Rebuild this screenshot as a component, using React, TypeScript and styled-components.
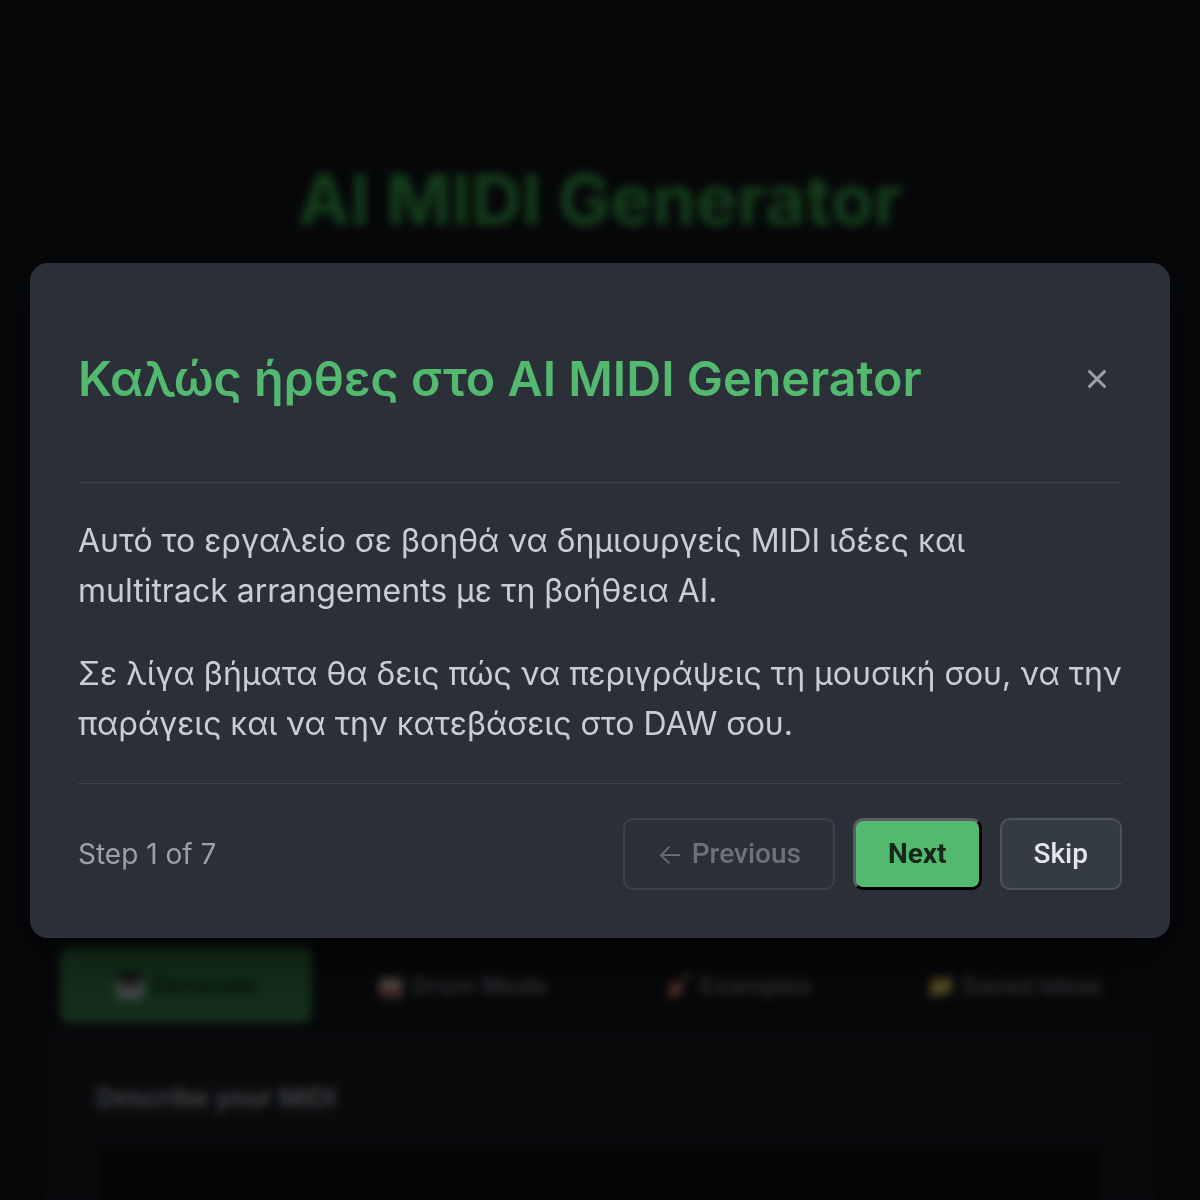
import React from 'react';
import styled, { createGlobalStyle } from 'styled-components';

const GlobalStyle = createGlobalStyle`
  html, body {
    margin: 0;
    padding: 0;
    background: #12151a;
    font-family: Inter, "Noto Sans", sans-serif;
  }
  * { box-sizing: border-box; }
`;

const Page = styled.div`
  height: 1200px;
  overflow: hidden;
  padding: 157px 45px 0;
  display: flex;
  flex-direction: column;
  align-items: center;
`;

const PageTitle = styled.h1`
  margin: 0 0 705px;
  font-size: 70px;
  font-weight: 700;
  color: #3fb950;
`;

const Tabs = styled.div`
  width: 100%;
  display: grid;
  grid-template-columns: repeat(4, 1fr);
  gap: 24px;
  padding: 0 15px;
`;

const Tab = styled.div<{ $active?: boolean }>`
  height: 76px;
  border-radius: 10px;
  display: flex;
  align-items: center;
  justify-content: center;
  gap: 12px;
  font-size: 24px;
  font-weight: 600;
  color: ${({ $active }) => ($active ? '#0d3318' : '#8b949e')};
  background: ${({ $active }) => ($active ? '#3d8a50' : 'transparent')};
`;

const Card = styled.div`
  width: 100%;
  margin-top: 8px;
  background: #1a1e24;
  border: 1px solid #262b33;
  border-radius: 12px;
  padding: 50px 50px;
  height: 300px;
`;

const CardTitle = styled.div`
  font-size: 26px;
  font-weight: 600;
  color: #c9d1d9;
  margin-bottom: 30px;
`;

const TextArea = styled.div`
  height: 140px;
  border: 1px solid #30363d;
  border-radius: 8px;
  background: #0d1117;
`;

const Overlay = styled.div`
  position: fixed;
  inset: 0;
  background: rgba(0, 0, 0, 0.66);
  backdrop-filter: blur(5px);
  display: flex;
  align-items: center;
  justify-content: center;
  padding: 0 30px;
`;

const Modal = styled.div`
  width: 100%;
  max-width: 1140px;
  background: #2b3038;
  border-radius: 18px;
  box-shadow: 0 20px 60px rgba(0, 0, 0, 0.5);
`;

const Header = styled.div`
  padding: 88px 48px 75px;
  display: flex;
  align-items: center;
  justify-content: space-between;
`;

const Title = styled.h2`
  margin: 0;
  font-size: 48.4px;
  line-height: 56px;
  font-weight: 600;
  color: #52b96f;
`;

const CloseButton = styled.button`
  background: none;
  border: none;
  padding: 0;
  margin-right: 12px;
  width: 26px;
  height: 26px;
  color: #9aa1aa;
  cursor: pointer;
  display: flex;
  align-items: center;
  justify-content: center;
`;

const Divider = styled.div`
  height: 1px;
  margin: 0 48px;
  background: #3d434c;
`;

const Body = styled.div`
  padding: 33px 48px 34px;
`;

const Paragraph = styled.p`
  margin: 0;
  font-size: 32px;
  line-height: 50px;
  color: #c9ced6;

  & + & {
    margin-top: 33px;
  }
`;

const Footer = styled.div`
  padding: 34px 48px 48px;
  display: flex;
  align-items: center;
  justify-content: space-between;
`;

const StepLabel = styled.span`
  font-size: 28px;
  color: #9aa1aa;
`;

const Actions = styled.div`
  display: flex;
  gap: 18px;
`;

const Arrow = styled.span`
  font-family: Inter, "DejaVu Sans", sans-serif;
  font-weight: 300;
  margin-right: 8px;
`;

const Button = styled.button<{ $variant: 'ghost' | 'primary' | 'secondary' }>`
  height: 72px;
  padding: 0 32px;
  border-radius: 10px;
  display: flex;
  align-items: center;
  font-family: Roboto, "Liberation Sans", sans-serif;
  font-size: 28px;
  font-weight: ${({ $variant }) => ($variant === 'primary' ? 700 : 500)};
  cursor: pointer;
  ${({ $variant }) =>
    $variant === 'primary'
      ? `
    background: #52b96f;
    color: #16261b;
    border: 3px solid;
    border-color: #5a5d62 #000 #000 #5a5d62;
  `
      : $variant === 'secondary'
      ? `
    background: #353b44;
    color: #e2e6ea;
    border: 2px solid #4b525b;
  `
      : `
    background: transparent;
    color: #6b727b;
    border: 2px solid #3b414a;
    cursor: default;
  `}
`;

export default function App() {
  return (
    <>
      <GlobalStyle />
      <Page>
        <PageTitle>AI MIDI Generator</PageTitle>
        <Tabs>
          <Tab $active>🎹 Generate</Tab>
          <Tab>🥁 Drum Mode</Tab>
          <Tab>🎸 Examples</Tab>
          <Tab>📁 Saved Ideas</Tab>
        </Tabs>
        <Card>
          <CardTitle>Describe your MIDI</CardTitle>
          <TextArea />
        </Card>
      </Page>

      <Overlay>
        <Modal role="dialog">
          <Header>
            <Title>Καλώς ήρθες στο AI MIDI Generator</Title>
            <CloseButton aria-label="Close">
              <svg width="22" height="22" viewBox="0 0 24 24" fill="none" stroke="currentColor" strokeWidth="3.2" strokeLinecap="square">
                <path d="M4 4L20 20M20 4L4 20" />
              </svg>
            </CloseButton>
          </Header>
          <Divider />
          <Body>
            <Paragraph>
              Αυτό το εργαλείο σε βοηθά να δημιουργείς MIDI ιδέες και multitrack arrangements με τη βοήθεια AI.
            </Paragraph>
            <Paragraph>
              Σε λίγα βήματα θα δεις πώς να περιγράψεις τη μουσική σου, να την παράγεις και να την κατεβάσεις στο DAW σου.
            </Paragraph>
          </Body>
          <Divider />
          <Footer>
            <StepLabel>Step 1 of 7</StepLabel>
            <Actions>
              <Button $variant="ghost" disabled>
                <Arrow>←</Arrow>Previous
              </Button>
              <Button $variant="primary">Next</Button>
              <Button $variant="secondary">Skip</Button>
            </Actions>
          </Footer>
        </Modal>
      </Overlay>
    </>
  );
}
